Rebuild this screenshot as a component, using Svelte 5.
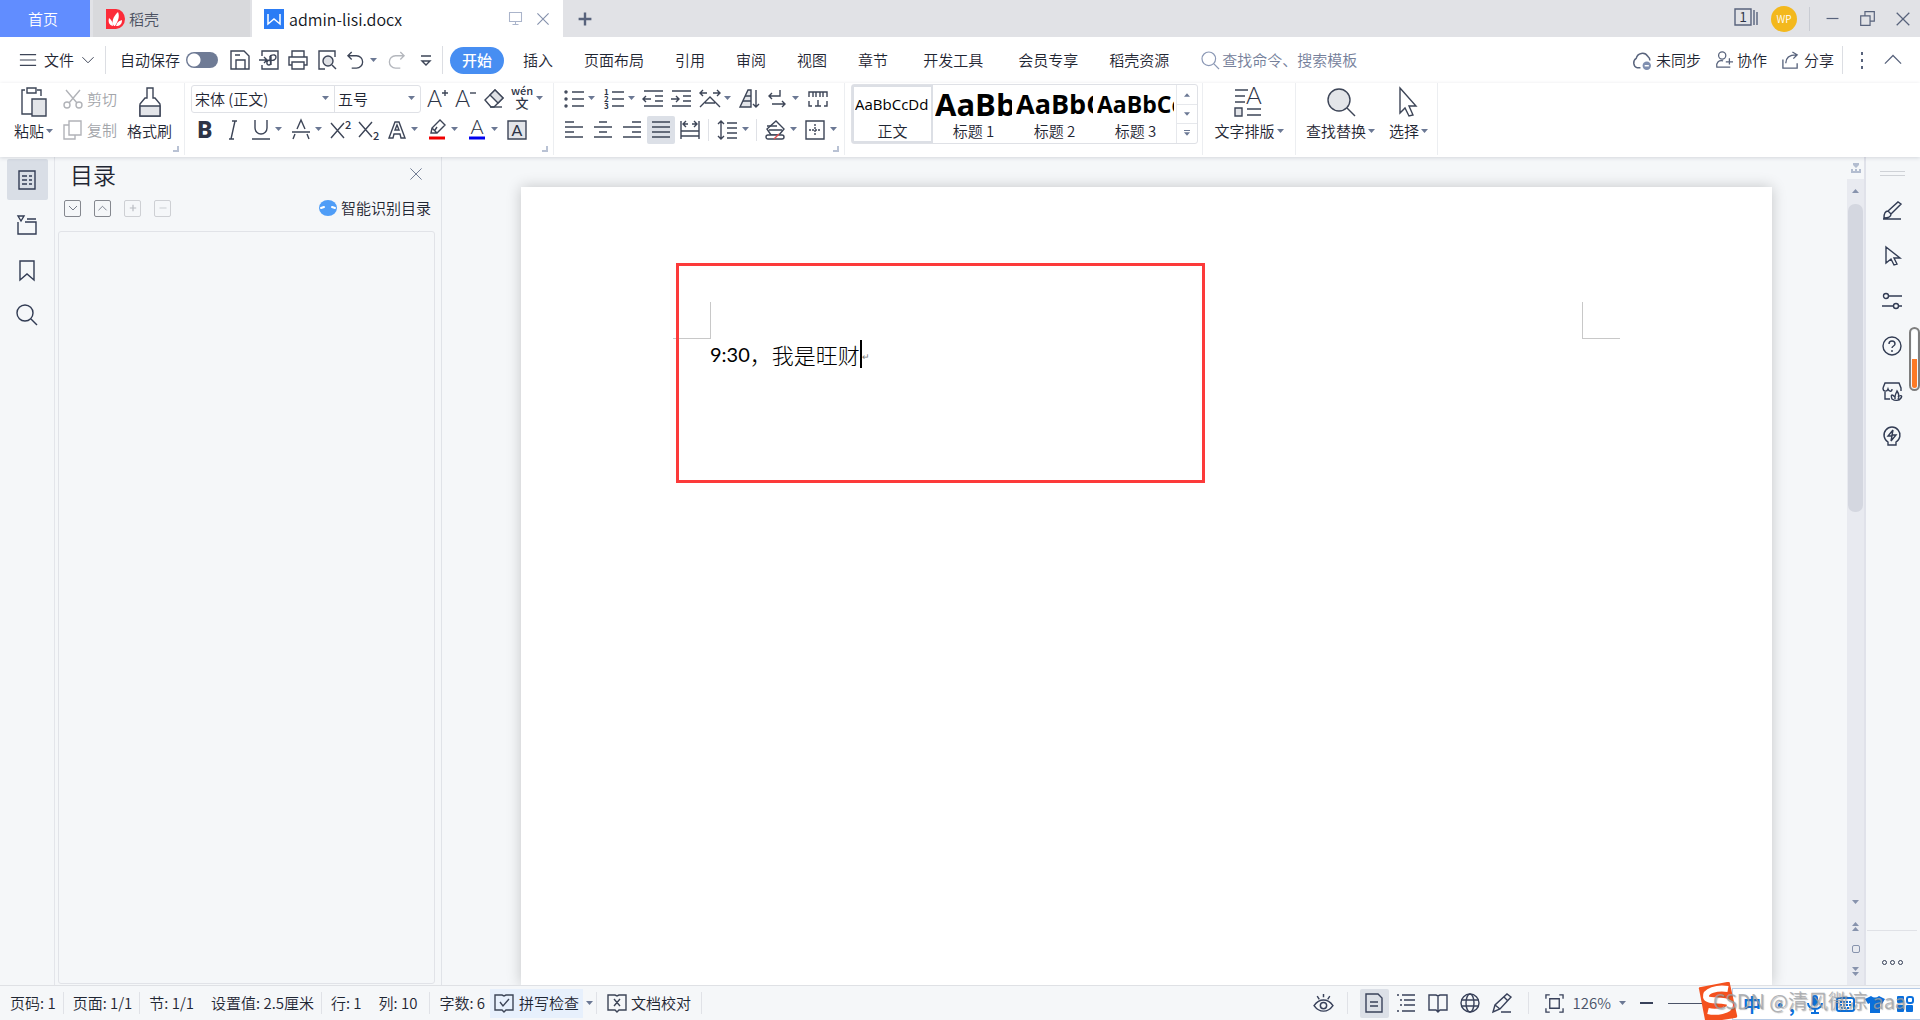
<script>
  const menuTabs = ['插入', '页面布局', '引用', '审阅', '视图', '章节', '开发工具', '会员专享', '稻壳资源'];
  const styles = [
    { name: '正文', sample: 'AaBbCcDd', cls: 'normal' },
    { name: '标题 1', sample: 'AaBb', cls: 'h1' },
    { name: '标题 2', sample: 'AaBbC', cls: 'h2' },
    { name: '标题 3', sample: 'AaBbCc', cls: 'h3' }
  ];
  const quick = [
    ['save', '保存'], ['export', '输出为PDF'], ['print', '打印'], ['preview', '打印预览']
  ];
  const fontRow1 = [['grow', '增大字号'], ['shrink', '减小字号'], ['eraser', '清除格式'], ['pinyin', '拼音指南', 1]];
  const fontRow2 = [
    ['bold', '加粗'], ['italic', '倾斜'], ['underline', '下划线', 1], ['strike', '删除线', 1],
    ['sup', '上标'], ['sub', '下标'], ['effect', '文字效果', 1], ['marker', '突出显示', 1],
    ['color', '字体颜色', 1], ['shade', '字符底纹']
  ];
  const paraRow1 = [
    ['bullets', '项目符号', 1], ['numbers', '编号', 1], ['outdent', '减少缩进'], ['indent', '增加缩进'],
    ['cjk', '中文版式', 1], ['sort', '排序'], ['wrap', '换行', 1], ['ruler', '制表位']
  ];
  const aligns = [['left', '左对齐'], ['center', '居中'], ['right', '右对齐'], ['justify', '两端对齐'], ['spread', '分散对齐']];
  const rail = [['outline', '目录'], ['chapter', '章节'], ['bookmark', '书签'], ['search', '查找']];
  const tools = [
    ['brush', '样式'], ['arrow', '选择'], ['sliders', '属性'], ['help', '帮助'], ['store', '稻壳'], ['bulb', '灵感']
  ];
  const views = [['page', '页面视图'], ['list', '大纲'], ['book', '阅读版式'], ['globe', 'Web版式'], ['pen', '写作模式']];

  const icons = {
    save: '<path d="M1 1h13l5 5v13H1z"/><path d="M6 19v-9h9v9M5 5h5"/>',
    export: '<path d="M3 6V1h16v18H3v-4M0 10h8M5 7l3 3-3 3M11 6c4-2 6-1 6 1 0 3-3 4-6 3M11 6v4c-4 0-4 5-1 5 2 0 2-2 1-5M12 6v9"/>',
    print: '<path d="M4 7V1h12v6M4 15H1V7h18v8h-3M4 12h12v7H4z"/>',
    preview: '<path d="M8 19H2V1h16v6"/><circle cx="11" cy="11" r="5" fill="#dfe1e5"/><path d="M15 15l4 4"/>',
    undo: '<path d="M6 1L2 5l4 4M2 5h9a6.500 6.500 0 010 13H6"/>',
    redo: '<path d="M14 1l4 4-4 4M18 5H9a6.500 6.500 0 000 13h5"/>',
    more: '<path d="M5 6h10M6 11l4 4 4-4z"/>',
    menu: '<path d="M1 4h18M1 10h18M1 16h18"/>',
    paste: '<path d="M6 3H3v24h10M18 3h4v6"/><path d="M8 1h9v5H8z"/><path d="M13 12h14v17H13z" fill="#e3e5e9"/>',
    cut: '<path d="M3 1l11 13M17 1L6 14"/><circle cx="4" cy="16" r="3"/><circle cx="16" cy="16" r="3"/>',
    copy: '<path d="M6 1h12v14H6z"/><path d="M6 5H1v14h11v-4"/>',
    painter: '<path d="M12 1h6v10h2l5 6v12H5V17l5-6h2z"/><path d="M5 19h20v10H5z" fill="#e3e5e9"/>',
    grow: '<text x="-1" y="18" class="ga">A</text><path d="M14 4h6M17 1v6"/>',
    shrink: '<text x="-1" y="18" class="ga">A</text><path d="M14 4h6"/>',
    eraser: '<path d="M1 11L11 1l8 8-9 9H7z"/><path d="M6 6l5-5 8 8-5 5z" fill="#dfe1e5"/><path d="M6 18h12"/>',
    pinyin: '<text x="10" y="6" text-anchor="middle" class="gw">wén</text><text x="10" y="19" text-anchor="middle" class="gc">文</text>',
    bold: '<text x="10" y="18" text-anchor="middle" class="gb">B</text>',
    italic: '<path d="M9 1h5M6 19h5M12 1L8 19"/>',
    underline: '<path d="M4 0v8a6 6 0 0012 0V0M1 19h18"/>',
    strike: '<path d="M6 9l4-9 4 9M1 12h18M4 14l-2 5M16 14l2 5"/>',
    sup: '<path d="M0 3l13 15M13 3L0 18"/><text x="14" y="9" class="gn">2</text>',
    sub: '<path d="M0 2l13 15M13 2L0 17"/><text x="14" y="20" class="gn">2</text>',
    effect: '<path d="M2 18L8 2h4l6 16h-4l-1-4H7l-1 4zM8 10h4l-2-5z"/>',
    marker: '<path d="M4 13l1-5 8-8 5 5-8 8zM5 8l5 5M8 10l2-3"/><path d="M2 18h16" stroke="#f00000" stroke-width="3"/>',
    color: '<text x="10" y="14" text-anchor="middle" class="gk">A</text><path d="M2 18h16" stroke="#0000f0" stroke-width="3"/>',
    shade: '<path d="M1 1h18v18H1z" fill="#e3e5e9"/><text x="10" y="16" text-anchor="middle" class="gs">A</text>',
    bullets: '<path d="M8 3h12M8 10h12M8 17h12"/><circle cx="2" cy="3" r="1"/><circle cx="2" cy="10" r="1"/><circle cx="2" cy="17" r="1"/>',
    numbers: '<path d="M8 3h12M8 10h12M8 17h12"/><text x="0" y="6" class="gt">1</text><text x="0" y="13" class="gt">2</text><text x="0" y="20" class="gt">3</text>',
    outdent: '<path d="M0 2h19M11 7h8M11 12h8M0 17h19M-1 10h8M2 7l-3 3 3 3"/>',
    indent: '<path d="M0 2h19M11 7h8M11 12h8M0 17h19M-1 10h8M4 7l3 3-3 3"/>',
    cjk: '<path d="M0 18L10 8l10 10M5 14h10M0 4h7M3 1L0 4l3 3M13 4h7M17 1l3 3-3 3"/>',
    sort: '<path d="M0 18L8 1h3v17z" fill="#e3e5e9"/><path d="M5 7h6M3 12h8M16 1v17M13 15l3 3 3-3"/>',
    wrap: '<path d="M12 1v6H1M4 4L1 7l3 3M4 15h13M14 12l3 3-3 3"/>',
    ruler: '<path d="M1 8V3h18v5M5 3v5M8 3v5M12 3v5M15 3v5M1 12v5h3M19 12v5h-3M7 17h6M10 11v6"/>',
    left: '<path d="M1 2h9M1 7h18M1 12h9M1 17h18"/>',
    center: '<path d="M6 2h8M1 7h18M6 12h8M1 17h18"/>',
    right: '<path d="M10 2h9M1 7h18M10 12h9M1 17h18"/>',
    justify: '<path d="M1 2h18M1 7h18M1 12h18M1 17h18"/>',
    spread: '<path d="M1 1v18M19 1v18M3 4h5M6 1L3 4l3 3M12 4h5M14 1l3 3-3 3M1 11h18M1 16h18"/>',
    spacing: '<path d="M4 1v18M1 4l3-3 3 3M1 16l3 3 3-3M10 3h10M10 8h10M10 13h10M10 18h10"/>',
    fill: '<path d="M2 9l9-8 8 8-5 6H6z" fill="#fff"/><path d="M2 6h10M4 10h13"/><path d="M3 15h14a2 2 0 010 4H3a2 2 0 010-4z" fill="#fff"/><path d="M9 19l5-5" stroke="#e05050"/>',
    border: '<path d="M1 1h18v18H1z"/><path d="M10 4v12M4 10h12" stroke-dasharray="2 1"/>',
    typeset: '<path d="M1 3h13M1 9h10M1 15h10M13 22h14M13 28h14"/><path d="M1 21h7v8H1z" fill="#e3e5e9"/><text x="12" y="17" class="gl">A</text>',
    find: '<circle cx="13" cy="13" r="11" fill="#e3e5e9"/><path d="M21 21l8 8"/>',
    arrow: '<path d="M4 1l14 11h-6l3 6-3 1-3-6-5 4z"/>',
    cursor: '<path d="M6 1l16 18h-7l4 9-4 1-4-8-5 5z"/>',
    outline: '<path d="M2 1h16v18H2zM5 6h5M12 6h3M5 10h5M12 10h3M5 14h5M12 14h3"/>',
    chapter: '<path d="M1 1h6L4 6zM10 4h9M1 7v12h18V7H8"/>',
    bookmark: '<path d="M3 1h14v19l-7-6-7 6z"/>',
    search: '<circle cx="8" cy="8" r="8"/><path d="M14 14l6 6"/>',
    brush: '<path d="M1 18h18M2 17c0-4 1-7 4-7l3 3c0 3-3 4-7 4zM6 10l10-9 3 2-10 10"/>',
    sliders: '<circle cx="4" cy="5" r="2.500"/><path d="M7 5h13M0 15h11M17 15h3"/><circle cx="14" cy="15" r="2.500"/>',
    help: '<circle cx="10" cy="10" r="9"/><path d="M7 8a3 3 0 116 0c0 2-3 2-3 4M10 14v2"/>',
    store: '<path d="M1 7l2-5h14l2 5v3M1 7c0 4 4 4 5 1 1 3 4 3 4 0M3 11v7h5"/><path d="M10 18c-2-6 1-4 3-2 0-2 1-4 2-6 2 3 2 5 1 6 2-2 5-2 3 1-2 3-6 3-9 1zM13 18v-3M16 18l1-2"/>',
    bulb: '<path d="M6 16a8 8 0 118 0v3H6z"/><path d="M11 4l-5 6h4l-1 5 5-6h-4z"/>',
    eye: '<path d="M1 12c5-7 13-7 18 0-5 7-13 7-18 0z"/><circle cx="10" cy="12" r="3"/><path d="M10 1v3M4 3l2 3M16 3l-2 3"/>',
    page: '<path d="M2 1h12l4 4v14H2zM6 9h8M6 13h8"/>',
    list: '<path d="M1 2h2M6 2h13M4 7h2M8 7h11M4 12h2M8 12h11M1 18h2M6 18h13"/>',
    book: '<path d="M1 2h7l2 1 2-1h7v15h-7l-2 2-2-2H1zM10 3v15"/>',
    globe: '<circle cx="10" cy="10" r="9"/><ellipse cx="10" cy="10" rx="4" ry="9"/><path d="M1 7h18M1 13h18"/>',
    pen: '<path d="M1 19l2-7L15 1l4 3L8 16zM3 12l5 4M9 19h10M12 4l4 4"/>',
    fit: '<path d="M1 5V1h4M15 1h4v4M19 15v4h-4M5 19H1v-4M5 5h10v10H5z"/>',
    check: '<path d="M1 2h7l2 1 2-1h7v15h-7l-2 2-2-2H1zM6 9l3 4 6-7"/>',
    proof: '<path d="M1 2h7l2 1 2-1h7v15h-7l-2 2-2-2H1zM7 6l6 7M13 6l-6 7"/>',
    cloud: '<path d="M9 17H6a5 5 0 01-1-9 6 6 0 0111-2 5 5 0 012 4"/><circle cx="15" cy="15" r="4" fill="#7f8fb0" stroke="none"/><path d="M13 15h4" stroke="#fff"/>',
    person: '<circle cx="8" cy="5" r="4"/><path d="M11 18H2c-1-5 2-8 7-7M16 8v7M12 12h8M5 18h12"/>',
    share: '<path d="M2 9v9h15v-5M5 13c0-6 4-9 11-9M12 1l5 3-4 4"/>',
    x: '<path d="M3 3l14 14M17 3L3 17"/>',
    monitor: '<path d="M2 2h16v12H2zM10 14v4M6 18h8"/>',
    plus: '<path d="M10 2v16M2 10h16" stroke-width="3"/>',
    up: '<path d="M1 14l9-9 9 9"/>',
    down: '<path d="M2 6l8 8 8-8"/>',
    min: '<path d="M3 10h14"/>',
    restore: '<path d="M2 7h11v11H2zM7 7V2h11v11h-5"/>',
    windows: '<path d="M1 2h16v16H1zM20 3v15M23 5v13"/><text x="9" y="15" text-anchor="middle" class="g1">1</text>'
  };
</script>

{#snippet icon(name, size = 20, box = 20)}
  <svg class="ic" width={size} height={size} viewBox="0 0 {box} {box}" aria-hidden="true">{@html icons[name]}</svg>
{/snippet}

{#snippet caret()}
  <svg class="caret" width="7" height="5" viewBox="0 0 7 5" aria-hidden="true"><path d="M0 0h7L3.500 4z" /></svg>
{/snippet}

{#snippet tool(item)}
  <button class="cell" aria-label={item[1]}>{@render icon(item[0])}</button>
  {#if item[2]}<button class="drop" aria-label="{item[1]}选项">{@render caret()}</button>{/if}
{/snippet}

<div class="app">
  <header class="titlebar">
    <button class="home">首页</button>
    <button class="doke">
      <svg width="19" height="20" viewBox="0 0 19 20" aria-hidden="true"><path d="M0 0h10a9 10 0 010 20H0z" fill="#fc2b39" /><path d="M8 17C5 13 7 8 12 3c2 5 0 9-3 14zM7 17c-4-1-5-4-4-8 3 2 4 5 4 8zM10 17c1-4 3-5 6-6 0 4-2 6-6 6z" fill="#fff" /></svg>
      稻壳
    </button>
    <div class="doctab">
      <svg width="20" height="20" viewBox="0 0 20 20" aria-hidden="true"><path d="M0 0h20v20H0z" fill="#2b7cf5" /><path d="M4 5v10l6-5 6 5V5" fill="none" stroke="#fff" stroke-width="1.500" /></svg>
      <span class="filename">admin-lisi.docx</span>
      <button class="pale" aria-label="投影">{@render icon('monitor', 15)}</button>
      <button class="close" aria-label="关闭文档">{@render icon('x', 16)}</button>
    </div>
    <button class="newtab" aria-label="新建">{@render icon('plus', 16)}</button>
    <div class="wincontrols">
      <button aria-label="窗口">{@render icon('windows', 24, 24)}</button>
      <button class="avatar">WP</button>
      <span class="vline"></span>
      <button aria-label="最小化">{@render icon('min', 17)}</button>
      <button aria-label="还原">{@render icon('restore', 17)}</button>
      <button aria-label="关闭">{@render icon('x', 18)}</button>
    </div>
  </header>

  <nav class="menubar">
    <button class="file">{@render icon('menu', 18)}<span>文件</span>{@render icon('down', 14)}</button>
    <span class="vline"></span>
    <label class="autosave">自动保存<input type="checkbox" /></label>
    <div class="quick">
      {#each quick as q}<button aria-label={q[1]}>{@render icon(q[0])}</button>{/each}
      <button aria-label="撤销">{@render icon('undo', 19)}</button>
      <button class="qdrop" aria-label="撤销选项">{@render caret()}</button>
      <button class="disabled" aria-label="恢复">{@render icon('redo', 19)}</button>
      <button aria-label="更多">{@render icon('more')}</button>
    </div>
    <span class="vline"></span>
    <button class="start">开始</button>
    <div class="tabs">
      {#each menuTabs as t}<button>{t}</button>{/each}
    </div>
    <label class="search">{@render icon('search', 17)}<input aria-label="查找" placeholder="查找命令、搜索模板" /></label>
    <div class="account">
      <button>{@render icon('cloud', 21)}未同步</button>
      <button>{@render icon('person', 18)}协作</button>
      <button>{@render icon('share', 19)}分享</button>
      <span class="vline"></span>
      <button class="dots" aria-label="更多"><i></i><i></i><i></i></button>
      <button aria-label="折叠功能区">{@render icon('up', 18)}</button>
    </div>
  </nav>

  <section class="ribbon" aria-label="开始">
    <div class="group clip">
      <button class="big">{@render icon('paste', 30, 30)}<span class="biglabel">粘贴{@render caret()}</span></button>
      <div class="pair">
        <button>{@render icon('cut')}剪切</button>
        <button>{@render icon('copy')}复制</button>
      </div>
      <button class="big">{@render icon('painter', 30, 30)}<span class="biglabel">格式刷</span></button>
      <span class="corner"></span>
    </div>
    <div class="group font">
      <div class="row">
        <div class="pick">
          <label class="family"><select aria-label="字体"><option>宋体 (正文)</option></select>{@render caret()}</label>
          <label class="size"><select aria-label="字号"><option>五号</option></select>{@render caret()}</label>
        </div>
        {#each fontRow1 as item}{@render tool(item)}{/each}
      </div>
      <div class="row">
        {#each fontRow2 as item}{@render tool(item)}{/each}
      </div>
      <span class="corner"></span>
    </div>
    <div class="group para">
      <div class="row">
        {#each paraRow1 as item}{@render tool(item)}{/each}
      </div>
      <div class="row spaced">
        {#each aligns as a}<button class="cell" class:on={a[0] === 'justify'} aria-label={a[1]}>{@render icon(a[0])}</button>{/each}
        <span class="sep"></span>
        {@render tool(['spacing', '行距', 1])}
        <span class="sep"></span>
        {@render tool(['fill', '底纹颜色', 1])}
        {@render tool(['border', '边框', 1])}
      </div>
      <span class="corner"></span>
    </div>
    <div class="group stylegroup">
      <div class="gallery">
        {#each styles as s, i}
          <button class="style" class:chosen={i === 0}>
            <span class="sample {s.cls}">{s.sample}</span>
            <span class="stylename">{s.name}</span>
          </button>
        {/each}
        <div class="gscroll">
          <button class="flip" aria-label="上一行">{@render caret()}</button>
          <button aria-label="下一行">{@render caret()}</button>
          <button class="all" aria-label="全部样式">{@render caret()}</button>
        </div>
      </div>
    </div>
    <div class="group typeset">
      <button class="big">{@render icon('typeset', 30, 30)}<span class="biglabel">文字排版{@render caret()}</span></button>
    </div>
    <div class="group finder">
      <button class="big">{@render icon('find', 30, 30)}<span class="biglabel">查找替换{@render caret()}</span></button>
      <button class="big">{@render icon('cursor', 30, 30)}<span class="biglabel">选择{@render caret()}</span></button>
    </div>
  </section>

  <main>
    <nav class="rail">
      {#each rail as r, i}<button class:active={i === 0} aria-label={r[1]}>{@render icon(r[0])}</button>{/each}
    </nav>
    <aside class="panel">
      <div class="phead">
        <h2>目录</h2>
        <button aria-label="关闭目录">{@render icon('x', 16)}</button>
      </div>
      <div class="ptools">
        <button aria-label="展开">{@render icon('down', 10)}</button>
        <button aria-label="收起">{@render icon('up', 9)}</button>
        <button class="faint" aria-label="增加级别">{@render icon('plus', 8)}</button>
        <button class="faint" aria-label="减少级别">{@render icon('min', 10)}</button>
        <a href="#toc">
          <svg width="18" height="16" viewBox="0 0 18 16" aria-hidden="true"><ellipse cx="9" cy="8" rx="9" ry="8" fill="#4f9df7" /><path d="M2 8l3-1M13 7l3 1" stroke="#fff" stroke-width="2" stroke-linecap="round" /></svg>
          智能识别目录
        </a>
      </div>
      <div class="pbody"></div>
    </aside>

    <section class="canvas">
      <article class="page">
        <div class="marks"><span class="mark tl"></span><span class="mark tr"></span></div>
        <p><span class="latin">9:30</span>，我是旺财<span class="cursor"></span><span class="ret">↵</span></p>
        <div class="frame"></div>
      </article>
    </section>

    <div class="vscroll">
      <svg class="split" width="12" height="12" viewBox="0 0 12 12" aria-hidden="true"><path d="M3 1h6v2L6 6 3 3zM1 7h2v2h2V7h2v2h2V7h2v4H1z" /></svg>
      <div class="track">
        <button class="flip" aria-label="向上滚动">{@render caret()}</button>
        <div class="thumb"></div>
        <div class="ends">
          <button aria-label="向下滚动">{@render caret()}</button>
          <button class="flip two" aria-label="上一页">{@render caret()}{@render caret()}</button>
          <button aria-label="浏览对象"><span class="ring"></span></button>
          <button class="two" aria-label="下一页">{@render caret()}{@render caret()}</button>
        </div>
      </div>
    </div>

    <nav class="side">
      <span class="grip"></span>
      {#each tools as t}<button aria-label={t[1]}>{@render icon(t[0])}</button>{/each}
      <button class="ellipsis" aria-label="更多工具"><i></i><i></i><i></i></button>
      <span class="meter"></span>
    </nav>
  </main>

  <footer>
    <div class="stats">
      <span>页码: 1</span><span class="bar">页面: 1/1</span><span class="bar">节: 1/1</span><span>设置值: 2.5厘米</span>
      <span class="bar">行: 1</span><span>列: 10</span><span class="bar words">字数: 6</span>
    </div>
    <button class="spell">{@render icon('check')}拼写检查</button>
    <button class="spelldrop" aria-label="拼写选项">{@render caret()}</button>
    <button class="proof">{@render icon('proof')}文档校对</button>
    <div class="views">
      <button class="eye" aria-label="护眼模式">{@render icon('eye', 21)}</button>
      {#each views as v, i}<button class="view" class:on={i === 0} aria-label={v[1]}>{@render icon(v[0])}</button>{/each}
      <button class="fit" aria-label="适合页面">{@render icon('fit', 19)}</button>
      <button class="zoom">126% {@render caret()}</button>
      <button class="minus" aria-label="缩小"></button>
      <input type="range" aria-label="缩放" min="10" max="500" value="400" />
    </div>
  </footer>

  <div class="ime">
    <svg class="sogou" width="42" height="38" viewBox="0 0 42 38" aria-hidden="true"><path d="M2 7Q1 5 4 5L30 0q3-1 3 2l7 31q1 3-2 3L12 40q-3 1-4-2z" fill="#f4511e" /><path d="M31 7C20 5 8 9 9 15c1 6 24 1 24 8 0 6-14 8-22 6" fill="none" stroke="#fff" stroke-width="6" /></svg>
    <div class="imebar">
      <b>中</b>
      <b>•,</b>
      <svg width="20" height="20" viewBox="0 0 20 20" aria-hidden="true"><rect x="7" y="1" width="6" height="11" rx="3" /><path d="M3 9a7 6 0 0014 0M10 15v4M6 19h8" fill="none" stroke="#0a6fdc" stroke-width="2" /></svg>
      <svg width="20" height="20" viewBox="0 0 20 20" aria-hidden="true"><rect x="2" y="4" width="17" height="13" rx="2" fill="none" stroke="#0a6fdc" stroke-width="2" /><path d="M5 8h11M5 11h11M6 14h8" stroke="#0a6fdc" stroke-width="2" stroke-dasharray="2 1" /></svg>
      <svg width="20" height="20" viewBox="0 0 20 20" aria-hidden="true"><path d="M6 2q4 3 8 0l6 3-3 5-2-1v10H5V9l-2 1-3-5z" /></svg>
      <svg width="20" height="20" viewBox="0 0 20 20" aria-hidden="true"><rect x="2" y="2" width="7" height="7" rx="1" /><rect x="12" y="3" width="6" height="6" rx="2" fill="none" stroke="#0a6fdc" stroke-width="2" /><rect x="2" y="11" width="7" height="7" rx="1" /><rect x="11" y="11" width="7" height="7" rx="1" /></svg>
    </div>
    <span class="watermark">CSDN @清风微凉 aaa</span>
  </div>
</div>

<style>
  :global(body) { margin: 0; }
  .app {
    position: relative;
    min-height: 100vh;
    display: flex;
    flex-direction: column;
    overflow: hidden;
    font: 350 15px/20px "Noto Sans CJK SC", "Noto Sans", sans-serif;
    color: #1f2633;
    background: #f5f7f9;
  }
  .app * { box-sizing: border-box; }
  button {
    display: flex;
    align-items: center;
    justify-content: center;
    flex: none;
    padding: 0;
    border: 0;
    background: none;
    font: inherit;
    color: inherit;
    white-space: nowrap;
  }
  .ic { display: block; flex: none; fill: none; stroke: #3d4557; stroke-width: 1.4; overflow: visible; }
  .ic :global(text) { fill: #2d3446; stroke: none; font-family: "Noto Sans CJK SC", sans-serif; }
  .ic :global(.ga) { font: 300 23px Lato, sans-serif; }
  .ic :global(.gk) { font: 300 20px Lato, sans-serif; }
  .ic :global(.gl) { font: 300 24px Lato, sans-serif; }
  .ic :global(.gs) { font: 400 16px Lato, sans-serif; }
  .ic :global(.gb) { font: 900 23px Roboto, sans-serif; }
  .ic :global(.gw) { font-size: 11px; font-weight: 500; }
  .ic :global(.gc) { font-size: 13px; font-weight: 500; }
  .ic :global(.gn) { font-size: 11px; font-weight: 500; }
  .ic :global(.g1) { font-size: 14px; font-weight: 350; }
  .ic :global(.gt) { font-size: 8px; font-weight: 700; }
  .caret { display: block; flex: none; fill: #6b7894; }
  .vline { width: 1px; height: 28px; background: #dcdee3; flex: none; }

  .titlebar { display: flex; height: 37px; background: #e1e2e6; }
  .home { width: 90px; padding-right: 4px; background: #618dff; color: #fff; }
  .doke { width: 157px; margin: 0 2px 0 3px; padding-left: 13px; justify-content: flex-start; gap: 4px; background: #d8d9dc; color: #4c5262; }
  .doctab { display: flex; align-items: center; width: 311px; padding: 0 12px; background: #fff; }
  .filename { flex: 1; margin-left: 5px; font-size: 16px; color: #11151c; }
  .pale .ic { stroke: #aab4ca; }
  .close { margin-left: 12px; }
  .close .ic { stroke: #8591ac; }
  .newtab { width: 44px; }
  .newtab .ic { stroke: #58637c; }
  .wincontrols { display: flex; align-items: center; margin-left: auto; padding-right: 8px; gap: 18px; }
  .wincontrols .ic { stroke: #58637c; }
  .wincontrols .vline { height: 24px; background: #c9ccd3; margin: 0 -4px 0 -6px; }
  .avatar { width: 26px; height: 26px; margin-left: -5px; border-radius: 50%; background: #f3b81d; color: #fff; font-size: 10px; }

  .menubar { display: flex; align-items: center; height: 46px; background: #fff; padding: 0 18px 0 19px; }
  .file { gap: 7px; margin-right: 10px; }
  .file .ic:first-child { stroke-width: 1.3; }
  .autosave { display: flex; align-items: center; gap: 6px; margin: 0 7px 0 14px; white-space: nowrap; }
  .autosave input {
    appearance: none; width: 32px; height: 16px; margin: 0; border-radius: 8px;
    background: radial-gradient(circle at 8px 8px, #fff 6px, #6f7b95 7px);
  }
  .quick { display: flex; align-items: center; margin-right: 2px; }
  .quick button { width: 29px; }
  .quick .qdrop { width: 12px; margin: 0 3px 0 -3px; }
  .quick .disabled .ic { stroke: #b4b7bd; }
  .start { height: 27px; width: 54px; margin-left: 7px; border-radius: 14px; background: #478ef2; color: #fff; font-weight: 500; }
  .tabs { display: flex; gap: 31px; margin-left: 19px; }
  .tabs button:nth-child(7), .tabs button:nth-child(8) { margin-left: 4px; }
  .search { display: flex; align-items: center; gap: 3px; margin-left: 33px; }
  .search .ic { stroke: #8b98b5; }
  .search input { width: 150px; padding: 0; border: 0; font: inherit; background: none; }
  .search input::placeholder { color: #75809a; opacity: 1; }
  .account { display: flex; align-items: center; gap: 14px; margin-left: auto; }
  .account button { gap: 4px; }
  .account .ic { stroke: #58637c; }
  .account .vline { margin-left: -6px; }
  .account .dots { width: 10px; flex-direction: column; gap: 4px; margin-right: 3px; }
  .dots i { width: 2px; height: 3px; background: #58637c; }

  .ribbon { display: flex; height: 74px; background: #fff; box-shadow: 0 1px 4px rgba(40, 50, 70, .16); z-index: 1; }
  .group { position: relative; display: flex; padding-top: 1px; }
  .group::after { content: ""; position: absolute; right: 0; top: 0; bottom: 2px; width: 1px; background: #eceef1; }
  .corner { position: absolute; right: 6px; bottom: 5px; width: 6px; height: 6px; border: solid #b9c2d4; border-width: 0 2px 2px 0; }
  .big { flex-direction: column; justify-content: flex-start; height: 60px; padding-top: 3px; gap: 4px; }
  .biglabel { display: flex; align-items: center; gap: 2px; line-height: 20px; }
  .clip { width: 185px; padding-left: 14px; }
  .clip .big:first-child { margin-right: 10px; }
  .pair { display: flex; flex-direction: column; gap: 2px; width: 64px; color: #a3a5aa; }
  .pair button { height: 29px; gap: 4px; justify-content: flex-start; }
  .pair .ic { stroke: #b1b3b8; }
  .font { width: 369px; flex-direction: column; padding-left: 6px; gap: 2px; }
  .row { display: flex; height: 29px; align-items: center; }
  .pick { display: flex; width: 230px; height: 28px; margin-right: 3px; border: 1px solid #dfe1e6; border-radius: 3px; }
  .pick label { display: flex; align-items: center; padding: 0 5px 0 3px; }
  .family { flex: 1; border-right: 1px solid #dfe1e6; }
  .size { width: 85px; }
  .pick select { flex: 1; min-width: 0; appearance: none; padding: 0; border: 0; background: none; font: inherit; color: inherit; }
  .cell { width: 28px; height: 28px; }
  .drop { width: 12px; height: 28px; justify-content: flex-start; }
  .cell.on, .view.on { background: #dce0e7; border-radius: 2px; }
  .para { width: 291px; flex-direction: column; padding-left: 6px; gap: 2px; }
  .spaced { gap: 1px; }
  .spaced .drop { margin-right: -2px; }
  .sep { width: 1px; height: 22px; margin: 0 3px; background: #dfe1e6; }
  .stylegroup { width: 358px; padding-left: 6px; }
  .gallery { display: flex; width: 347px; height: 60px; border: 1px solid #dfe1e6; border-radius: 3px; }
  .style { width: 81px; flex-direction: column; justify-content: flex-start; }
  .style.chosen { outline: 2px solid #dcdfe5; outline-offset: -2px; }
  .sample { display: block; width: 77px; height: 36px; overflow: hidden; text-align: left; font-family: "Open Sans", sans-serif; font-weight: 400; line-height: 38px; color: #000; }
  .sample.normal { width: 75px; font-size: 15px; }
  .sample.h1 { font-size: 31px; font-weight: 700; }
  .sample.h2 { font-size: 27px; font-weight: 700; }
  .sample.h3 { font-size: 23px; font-weight: 700; }
  .stylename { line-height: 20px; }
  .gscroll { display: flex; flex: 1; flex-direction: column; border-left: 1px solid #e6e8ec; }
  .gscroll button { flex: 1; }
  .gscroll .caret { width: 6px; }
  .gscroll button + button { border-top: 1px solid #e6e8ec; }
  .all { flex-direction: column; gap: 1px; }
  .all::before { content: ""; width: 6px; height: 1px; background: #6b7894; }
  .flip .caret { transform: rotate(180deg); }
  .typeset { width: 93px; justify-content: center; padding-right: 1px; }
  .finder { width: 142px; gap: 14px; padding-left: 10px; }

  main { display: flex; flex: 1; min-height: 0; }
  .rail { display: flex; flex-direction: column; align-items: center; width: 55px; gap: 4px; padding-top: 2px; border-right: 1px solid #e3e5ea; }
  .rail button { width: 41px; height: 41px; border-radius: 2px; }
  .rail .active { background: #d9dee6; }
  .rail .ic, .side .ic { stroke: #323c54; }
  .panel { display: flex; flex-direction: column; width: 387px; padding: 0 6px 1px 3px; border-right: 1px solid #e0e3e8; }
  .phead { display: flex; justify-content: space-between; padding: 0 11px 0 12px; height: 38px; }
  .phead button { height: 34px; }
  .phead .ic { stroke: #6d7890; stroke-width: 1.2; }
  h2 { margin: 0; font-size: 23px; line-height: 34px; font-weight: 350; }
  .ptools { display: flex; align-items: center; gap: 13px; height: 36px; padding: 0 4px 10px 6px; }
  .ptools button { width: 17px; height: 17px; border: 1px solid #85888f; border-radius: 2px; }
  .ptools .faint { border-color: #ced0d4; }
  .ptools .faint .ic { stroke: #b9bcc2; }
  .ptools a { display: flex; align-items: center; gap: 4px; margin-left: auto; color: #1f2633; text-decoration: none; }
  .pbody { flex: 1; border: 1px solid #e1e3e8; border-radius: 3px; }

  .canvas { display: flex; flex: 1; padding: 30px 75px 0 79px; min-width: 0; overflow: hidden; }
  .page { position: relative; flex: 1; background: #fff; box-shadow: 0 0 14px rgba(0, 0, 0, .2); padding-top: 115px; }
  .marks { display: flex; justify-content: space-between; padding: 0 152px; }
  .mark { width: 38px; height: 37px; border-bottom: 1px solid #c8c8c8; }
  .tl { border-right: 1px solid #c8c8c8; }
  .tr { border-left: 1px solid #c8c8c8; }
  p { display: flex; align-items: center; margin: 0 0 0 189px; font-size: 22px; line-height: 30px; font-weight: 300; color: #000; }
  .latin { font: 400 20px/30px Lato, sans-serif; }
  .cursor { width: 2px; height: 28px; background: #000; }
  .ret { padding-top: 6px; font-size: 9px; line-height: 12px; color: #777; }
  .frame { position: absolute; left: 155px; top: 76px; width: 529px; height: 220px; border: 3px solid #fc3a3a; }

  .vscroll { display: flex; flex-direction: column; align-items: center; width: 19px; border-right: 2px solid #e0e2ea; }
  .split { margin: 5px 0; fill: #b3bdd0; }
  .track { display: flex; flex: 1; flex-direction: column; align-items: center; width: 100%; background: #e8eaf0; }
  .track .caret { fill: #8793ad; }
  .track button { width: 17px; height: 23px; }
  .thumb { width: 15px; height: 308px; margin-top: 2px; border-radius: 7px; background: #d4d7e0; }
  .ends { margin-top: auto; padding-bottom: 2px; }
  .two { flex-direction: column; }
  .ring { width: 8px; height: 8px; border: 1px solid #8793ad; border-radius: 2px; }
  .side { position: relative; display: flex; flex-direction: column; align-items: center; width: 54px; padding: 14px 2px 0 0; }
  .side button { height: 45px; width: 45px; }
  .grip { width: 25px; height: 5px; margin-bottom: 12px; border: solid #cfd2d7; border-width: 1px 0; }
  .side .ellipsis { width: 50px; height: 55px; margin-top: auto; gap: 3px; border-top: 1px solid #e0e2e7; padding-top: 8px; }
  .ellipsis i { width: 5px; height: 5px; border: 1px solid #323c54; border-radius: 50%; }
  .meter { position: absolute; right: 0; top: 170px; width: 11px; height: 64px; border: 2px solid #7e7e7e; border-radius: 6px; background: linear-gradient(#fff 50%, #fc7a27 50%); background-clip: content-box; padding: 1px; }

  footer { display: flex; align-items: center; height: 35px; padding-left: 10px; border-top: 1px solid #dfe1e5; }
  .stats { display: flex; gap: 17px; white-space: nowrap; }
  .bar { position: relative; }
  .bar::before { content: ""; position: absolute; left: -10px; top: -1px; width: 1px; height: 22px; background: #e0e2e7; }
  .words { margin-left: 5px; }
  .spell { height: 29px; gap: 5px; margin-left: 5px; padding: 0 4px; background: #e7f0fc; }
  .spelldrop { width: 14px; height: 22px; border-right: 1px solid #e0e2e7; }
  .proof { gap: 4px; height: 22px; padding: 0 10px; border-right: 1px solid #e0e2e7; }
  .views { display: flex; align-items: center; margin-left: auto; padding-right: 192px; gap: 3px; }
  .views .ic { stroke: #38415a; }
  .eye { width: 35px; height: 22px; border-right: 1px solid #e0e2e7; padding-right: 13px; margin-right: 9px; }
  .view { width: 29px; height: 29px; }
  .fit { height: 22px; margin-left: 8px; padding-left: 16px; border-left: 1px solid #e0e2e7; }
  .zoom { gap: 8px; margin: 0 11px 0 6px; color: #4a5368; }
  .minus::before { content: ""; width: 13px; height: 2px; background: #38415a; }
  .views input { appearance: none; width: 60px; height: 1px; margin: 0 0 0 12px; background: #4a5368; }
  .views input::-webkit-slider-thumb { appearance: none; width: 1px; height: 1px; }

  .ime { position: absolute; right: 0; bottom: 0; width: 223px; height: 38px; display: flex; align-items: flex-end; }
  .sogou { position: relative; z-index: 1; margin-right: -7px; flex: none; }
  .imebar { display: flex; flex: 1; align-items: center; justify-content: space-between; height: 32px; padding: 0 5px 0 10px; background: #fff; border: 1px solid #b8cce6; border-right: 0; fill: #0a6fdc; color: #0a6fdc; font-size: 18px; }
  .watermark { position: absolute; z-index: 2; right: 14px; top: 7px; font-size: 20px; line-height: 24px; white-space: nowrap; color: rgba(160, 162, 166, .8); text-shadow: 1px 1px 1px rgba(90, 90, 90, .4); }
</style>
